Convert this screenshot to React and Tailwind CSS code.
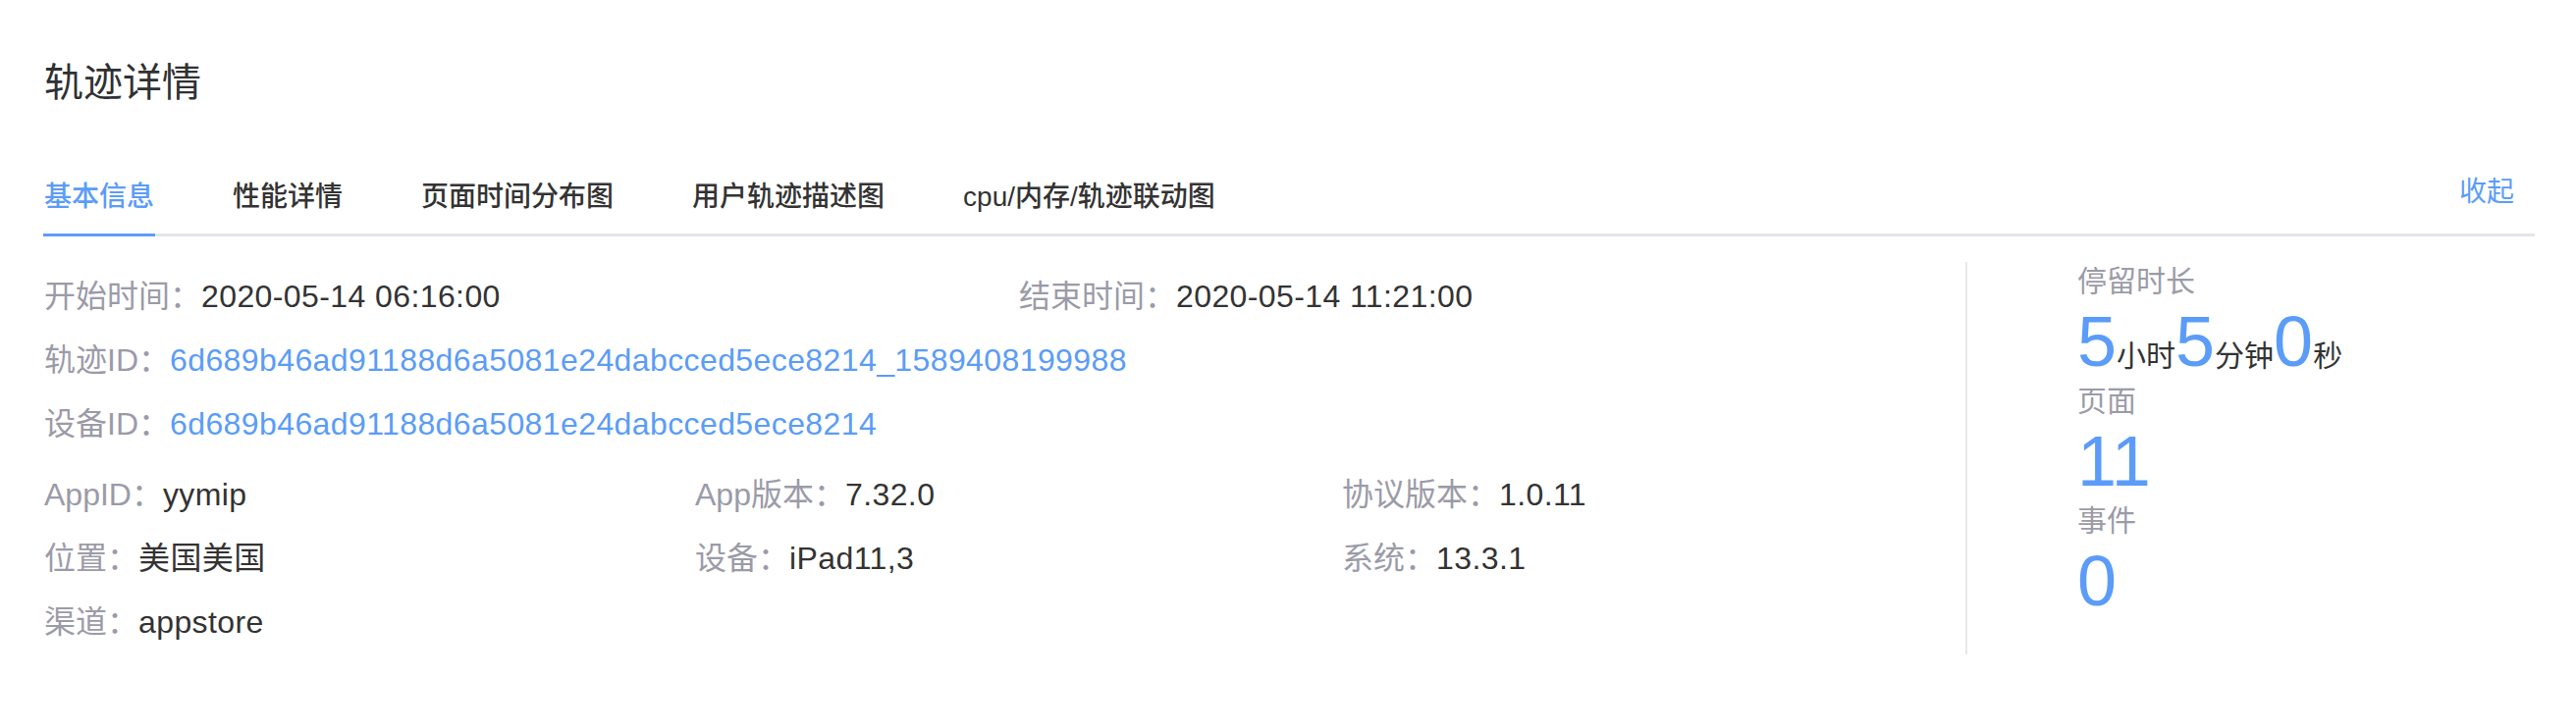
import React from "react";

const tabs = ["基本信息", "性能详情", "页面时间分布图", "用户轨迹描述图", "cpu/内存/轨迹联动图"];

function Field({ label, value, link }) {
  return (
    <div className="whitespace-nowrap">
      <span className="text-[#9b9ba8]">{label}：</span>
      <span className={"tracking-[0.4px] " + (link ? "text-[#5b9cf8]" : "text-[#333333]")}>{value}</span>
    </div>
  );
}

function Stat({ label, children }) {
  return (
    <div>
      <div className="text-[30px] leading-[40px] text-[#9b9ba8]">{label}</div>
      <div className="flex items-baseline h-[82px]">{children}</div>
    </div>
  );
}

function Num({ children }) {
  return <span className="text-[72px] leading-[82px] text-[#5b9cf8]">{children}</span>;
}

function Unit({ children }) {
  return <span className="text-[30px] leading-[30px] text-[#333333]">{children}</span>;
}

export default function App() {
  return (
    <div className="w-[2624px] h-[742px] bg-white pl-[44px] pr-[42px] font-['Liberation_Sans','Noto_Sans_CJK_SC',sans-serif]">
      <h1 className="pt-[56px] pl-[1px] text-[40px] leading-[56px] text-[#303133]">轨迹详情</h1>

      <div className="mt-[69px] flex items-start justify-between border-b-[3px] border-[#e4e4ea]">
        <div className="flex gap-[78px]">
          {tabs.map((t, i) => (
            <div
              key={t}
              className={
                "-mb-[3px] px-[1px] pb-[17px] text-[28px] leading-[40px] font-medium border-b-[3px] " +
                (i === 0 ? "border-[#5b9cf8] text-[#5b9cf8]" : "border-transparent text-[#333333]")
              }
            >
              {t}
            </div>
          ))}
        </div>
        <div className="-mt-[5px] mr-[21px] text-[28px] leading-[40px] text-[#5b9cf8]">收起</div>
      </div>

      <div className="mt-[26px] flex">
        <div className="w-[1958px] pt-[3px] pl-[1px] text-[32px] leading-[65px]">
          <div className="grid grid-cols-[993px_1fr]">
            <Field label="开始时间" value="2020-05-14 06:16:00" />
            <Field label="结束时间" value="2020-05-14 11:21:00" />
            <div className="col-span-2">
              <Field label="轨迹ID" value="6d689b46ad91188d6a5081e24dabcced5ece8214_1589408199988" link />
            </div>
            <div className="col-span-2">
              <Field label="设备ID" value="6d689b46ad91188d6a5081e24dabcced5ece8214" link />
            </div>
          </div>
          <div className="mt-[7px] grid grid-cols-[663px_659px_1fr]">
            <Field label="AppID" value="yymip" />
            <Field label="App版本" value="7.32.0" />
            <Field label="协议版本" value="1.0.11" />
            <Field label="位置" value="美国美国" />
            <Field label="设备" value="iPad11,3" />
            <Field label="系统" value="13.3.1" />
            <Field label="渠道" value="appstore" />
          </div>
        </div>

        <div className="border-l-2 border-[#e8e8e8] pl-[112px] pb-[33px]">
          <Stat label="停留时长">
            <Num>5</Num>
            <Unit>小时</Unit>
            <Num>5</Num>
            <Unit>分钟</Unit>
            <Num>0</Num>
            <Unit>秒</Unit>
          </Stat>
          <Stat label="页面">
            <Num>11</Num>
          </Stat>
          <Stat label="事件">
            <Num>0</Num>
          </Stat>
        </div>
      </div>
    </div>
  );
}
